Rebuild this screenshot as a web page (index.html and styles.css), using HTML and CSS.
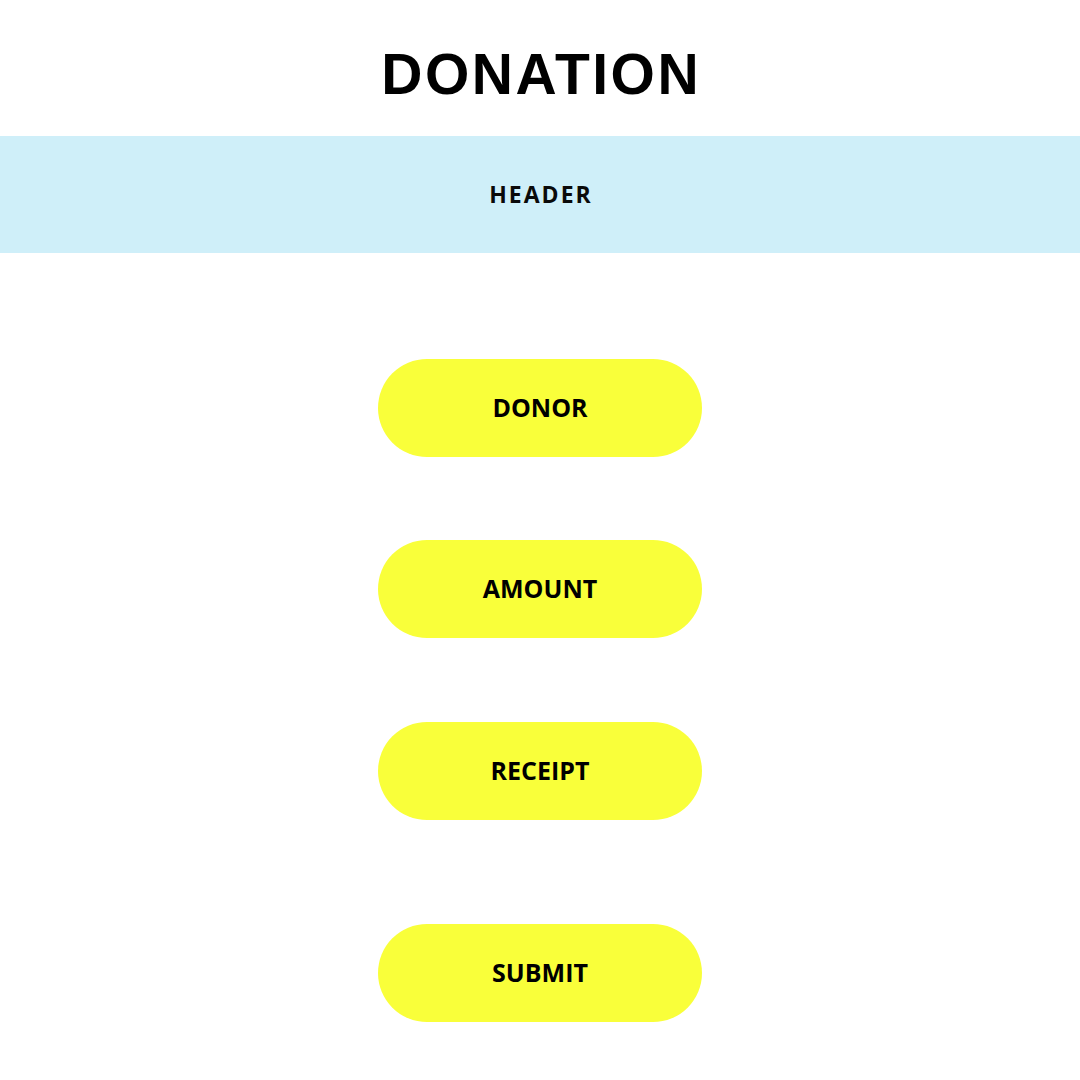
FILE: index.html
```html
<!DOCTYPE html>
<html>
<head>
<meta charset="utf-8">
<link rel="stylesheet" href="styles.css">
</head>
<body>
<div class="title-wrap"><h1 class="title">DONATION</h1></div>
<div class="header-band">HEADER</div>
<div class="buttons">
  <div class="pill pill-1">DONOR</div>
  <div class="pill pill-2">AMOUNT</div>
  <div class="pill pill-3">RECEIPT</div>
  <div class="pill pill-4">SUBMIT</div>
</div>
</body>
</html>
```
FILE: styles.css
```css
html, body {
  margin: 0;
  padding: 0;
  background: #ffffff;
  width: 1080px;
  height: 1080px;
  overflow: hidden;
}
.title-wrap {
  height: 136px;
  box-sizing: border-box;
  padding-top: 42px;
}
.title {
  margin: 0;
  text-align: center;
  font-family: "Liberation Sans", Arial, sans-serif;
  font-weight: 700;
  font-size: 57px;
  line-height: 64px;
  letter-spacing: 2.5px;
  text-indent: 2.5px;
  color: #000;
}
.header-band {
  height: 117px;
  background: #cfeff9;
  display: flex;
  align-items: center;
  justify-content: center;
  font-family: "Open Sans", sans-serif;
  font-weight: 700;
  font-size: 23px;
  letter-spacing: 2px;
  padding-left: 2px;
  padding-bottom: 2px;
  box-sizing: border-box;
  color: #0a0a0a;
}
.buttons {
  display: flex;
  flex-direction: column;
  align-items: center;
}
.pill {
  width: 324px;
  height: 98px;
  border-radius: 49px;
  background: #f9ff3a;
  display: flex;
  align-items: center;
  justify-content: center;
  padding-bottom: 2px;
  box-sizing: border-box;
  font-family: "Open Sans", sans-serif;
  font-weight: 700;
  font-size: 25px;
  color: #000;
}
.pill-1 { margin-top: 106px; }
.pill-2 { margin-top: 83px; }
.pill-3 { margin-top: 84px; }
.pill-4 { margin-top: 104px; }
```
